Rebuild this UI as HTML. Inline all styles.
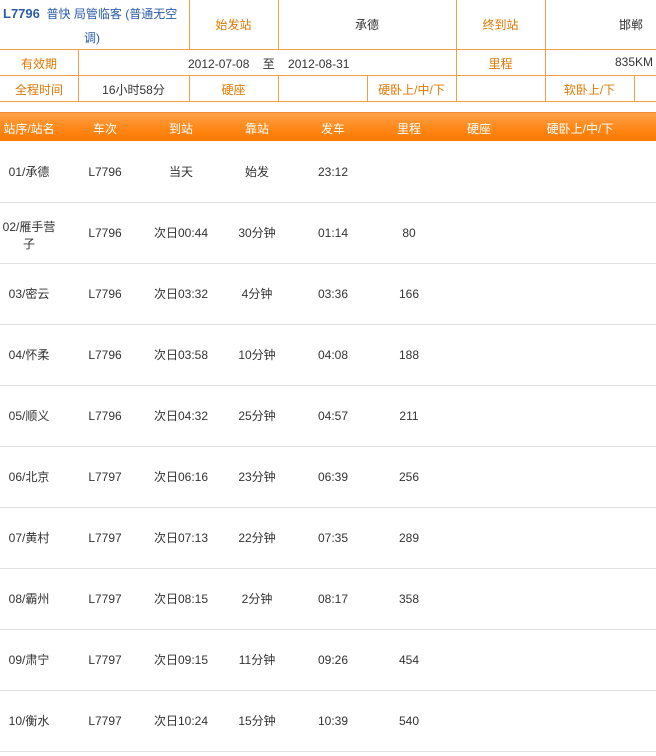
<!DOCTYPE html>
<html><head><meta charset="utf-8"><style>
body{margin:0;width:656px;height:756px;background:#fff;position:relative;overflow:hidden;font-family:"Liberation Sans","Noto Sans CJK SC","WenQuanYi Zen Hei",sans-serif;font-size:12px;color:#333}
.a{position:absolute;white-space:nowrap}
.h{position:absolute;height:1px;background:#f0a040;left:0;width:656px}
.v{position:absolute;width:1px;background:#f0a040}
.o{color:#e07800}
.c{text-align:center}
.g{position:absolute;left:0;width:656px;height:1px;background:#e0e0e0}
</style></head><body>
<div class="h" style="top:49px"></div>
<div class="h" style="top:75px"></div>
<div class="h" style="top:101px"></div>
<div class="v" style="left:189px;top:0;height:50px"></div>
<div class="v" style="left:278px;top:0;height:50px"></div>
<div class="v" style="left:456px;top:0;height:102px"></div>
<div class="v" style="left:545px;top:0;height:102px"></div>
<div class="v" style="left:78px;top:49px;height:53px"></div>
<div class="v" style="left:189px;top:75px;height:27px"></div>
<div class="v" style="left:278px;top:75px;height:27px"></div>
<div class="v" style="left:367px;top:75px;height:27px"></div>
<div class="v" style="left:634px;top:75px;height:27px"></div>

<div class="a" style="left:3px;top:5px;color:#2a5ca8;font-size:12px"><b style="font-size:13px">L7796</b>&nbsp; 普快 局管临客 (普通无空</div>
<div class="a" style="left:84px;top:29px;color:#2a5ca8">调)</div>
<div class="a o c" style="left:189px;width:89px;top:16px">始发站</div>
<div class="a c" style="left:278px;width:178px;top:16px">承德</div>
<div class="a o c" style="left:456px;width:89px;top:16px">终到站</div>
<div class="a" style="left:619px;top:16px">邯郸</div>

<div class="a o c" style="left:0;width:78px;top:55px">有效期</div>
<div class="a" style="left:188px;top:55px">2012-07-08&nbsp;&nbsp;&nbsp; 至&nbsp;&nbsp;&nbsp; 2012-08-31</div>
<div class="a o c" style="left:456px;width:89px;top:55px">里程</div>
<div class="a" style="left:615px;top:55px">835KM</div>

<div class="a o c" style="left:0;width:78px;top:81px">全程时间</div>
<div class="a c" style="left:78px;width:111px;top:81px">16小时58分</div>
<div class="a o c" style="left:189px;width:89px;top:81px">硬座</div>
<div class="a o c" style="left:367px;width:89px;top:81px">硬卧上/中/下</div>
<div class="a o c" style="left:545px;width:89px;top:81px">软卧上/下</div>

<div style="position:absolute;left:0;top:112px;width:656px;height:29px;background:linear-gradient(#ffa24a,#ff8a1c 50%,#ff7800);border-top:1px solid #f08a30;box-sizing:border-box"></div>
<div class="a" style="left:0;top:120px;width:656px;height:16px;color:#fff">
<span class="a c" style="left:0;width:58px">站序/站名</span>
<span class="a c" style="left:75px;width:60px">车次</span>
<span class="a c" style="left:151px;width:60px">到站</span>
<span class="a c" style="left:227px;width:60px">靠站</span>
<span class="a c" style="left:303px;width:60px">发车</span>
<span class="a c" style="left:379px;width:60px">里程</span>
<span class="a c" style="left:449px;width:60px">硬座</span>
<span class="a c" style="left:540px;width:80px">硬卧上/中/下</span>
</div>

<div id="rows"></div>
<script>
var d=[["01/承德","L7796","当天","始发","23:12",""],["02/雁手营<br>子","L7796","次日00:44","30分钟","01:14","80"],["03/密云","L7796","次日03:32","4分钟","03:36","166"],["04/怀柔","L7796","次日03:58","10分钟","04:08","188"],["05/顺义","L7796","次日04:32","25分钟","04:57","211"],["06/北京","L7797","次日06:16","23分钟","06:39","256"],["07/黄村","L7797","次日07:13","22分钟","07:35","289"],["08/霸州","L7797","次日08:15","2分钟","08:17","358"],["09/肃宁","L7797","次日09:15","11分钟","09:26","454"],["10/衡水","L7797","次日10:24","15分钟","10:39","540"]];
var L=[0,75,151,227,303,379],W=[58,60,60,60,60,60],h="";
for(var i=0;i<d.length;i++){var y=141+61*i;h+='<div class="g" style="top:'+(y+61)+'px"></div>';
for(var j=0;j<6;j++){var two=d[i][j].indexOf("<br>")>=0;h+='<div class="a c" style="left:'+L[j]+'px;width:'+W[j]+'px;top:'+(y+(two?17:24))+'px;line-height:'+(two?'17px':'15px')+'">'+d[i][j]+'</div>';}}
document.getElementById("rows").innerHTML=h;
</script>
</body></html>
